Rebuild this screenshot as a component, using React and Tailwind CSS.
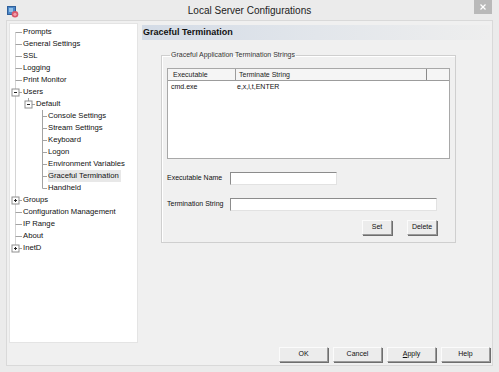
import React from 'react';

const rows = [
  { label: 'Prompts', lvl: 0 },
  { label: 'General Settings', lvl: 0 },
  { label: 'SSL', lvl: 0 },
  { label: 'Logging', lvl: 0 },
  { label: 'Print Monitor', lvl: 0 },
  { label: 'Users', lvl: 0, box: 'minus' },
  { label: 'Default', lvl: 1, box: 'minus' },
  { label: 'Console Settings', lvl: 2 },
  { label: 'Stream Settings', lvl: 2 },
  { label: 'Keyboard', lvl: 2 },
  { label: 'Logon', lvl: 2 },
  { label: 'Environment Variables', lvl: 2 },
  { label: 'Graceful Termination', lvl: 2, sel: true },
  { label: 'Handheld', lvl: 2, last: true },
  { label: 'Groups', lvl: 0, box: 'plus' },
  { label: 'Configuration Management', lvl: 0 },
  { label: 'IP Range', lvl: 0 },
  { label: 'About', lvl: 0 },
  { label: 'InetD', lvl: 0, box: 'plus', last: true },
];

const LC = '#a3a3a3';
const LC0 = '#d4d4d4';

function Box({ cx, kind }) {
  return (
    <g>
      <rect x={cx - 3.5} y={3} width={7} height={7} fill="#fff" stroke="#8f8f8f" strokeWidth="1" />
      <line x1={cx - 1.5} y1={6.5} x2={cx + 1.5} y2={6.5} stroke="#222" strokeWidth="1" />
      {kind === 'plus' && <line x1={cx} y1={5} x2={cx} y2={8} stroke="#222" strokeWidth="1" />}
    </g>
  );
}

function Gutter({ row, i }) {
  const widths = [13, 26, 38];
  const w = widths[row.lvl];
  const x0 = 5.5, x1 = 18.5, x2 = 32.5;
  const isFirst = i === 0;
  const isLast0 = row.lvl === 0 && row.last;
  return (
    <svg width={w} height={12} className="shrink-0 block">
      <line x1={x0} y1={isFirst ? 6.5 : 0} x2={x0} y2={isLast0 ? 6.5 : 12} stroke={LC0} strokeWidth="1" />
      {row.lvl === 0 && <line x1={x0} y1={6.5} x2={12} y2={6.5} stroke={LC} strokeWidth="1" />}
      {row.lvl === 0 && row.box && <Box cx={x0} kind={row.box} />}
      {row.lvl === 1 && (
        <>
          <line x1={x1} y1={0} x2={x1} y2={6.5} stroke={LC} strokeWidth="1" />
          <line x1={x1} y1={6.5} x2={25} y2={6.5} stroke={LC} strokeWidth="1" />
          <Box cx={x1} kind={row.box} />
        </>
      )}
      {row.lvl === 2 && (
        <>
          <line x1={x2} y1={0} x2={x2} y2={row.last ? 6.5 : 12} stroke={LC} strokeWidth="1" />
          <line x1={x2} y1={6.5} x2={37} y2={6.5} stroke={LC} strokeWidth="1" />
        </>
      )}
    </svg>
  );
}

function Btn({ children, className }) {
  return (
    <div
      className={
        'h-[15px] flex items-center justify-center bg-[#ececec] border border-t-[#fbfbfb] border-l-[#fbfbfb] border-r-[#9a9a9a] border-b-[#9a9a9a] shadow-[1px_1px_0_0_#6e6e6e] text-[7px] text-[#111] ' +
        className
      }
    >
      {children}
    </div>
  );
}

export default function App() {
  return (
    <div className="w-[499px] h-[372px] bg-[#ebebeb] flex flex-col overflow-hidden font-['Liberation_Sans',Arial,sans-serif] text-[#111]">
      {/* Title bar */}
      <div className="h-[20px] flex items-start shrink-0">
        <div className="w-[32px] pl-[7px] pt-[6px]">
          <svg width="12" height="12" viewBox="0 0 12 12" className="block">
            <rect x="0.5" y="0.5" width="8" height="8" fill="#4b86c7" stroke="#2f5f99" />
            <rect x="2" y="2" width="4" height="4" fill="#8fc0e8" />
            <circle cx="8" cy="8.3" r="3.3" fill="#d9566a" />
            <circle cx="8" cy="8.3" r="1.6" fill="#f0a0aa" />
          </svg>
        </div>
        <div className="flex-1 text-center text-[10px] leading-[20px] pt-[1px] text-[#222]">
          Local Server Configurations
        </div>
        <div className="w-[32px] flex justify-end pr-[7px]">
          <div className="w-[18px] h-[14px] bg-[#b9b9b9] flex items-center justify-center">
            <svg width="6" height="6" viewBox="0 0 6 6" className="block">
              <line x1="0.5" y1="0.5" x2="5.5" y2="5.5" stroke="#fff" strokeWidth="1.3" />
              <line x1="5.5" y1="0.5" x2="0.5" y2="5.5" stroke="#fff" strokeWidth="1.3" />
            </svg>
          </div>
        </div>
      </div>

      {/* Client area */}
      <div className="mx-[6px] h-[346px] shrink-0 bg-[#f0f0f0] border border-[#d9d9d9] flex flex-col">
        <div className="flex pt-[2px] pl-[2px] h-[322px]">
          {/* Tree */}
          <div className="w-[129px] h-[320px] bg-white border border-[#e4e4e4] pt-[2px] text-[7.7px] leading-[12px]">
            {rows.map((row, i) => (
              <div key={row.label} className="h-[12px] flex items-center">
                <Gutter row={row} i={i} />
                <span className={row.sel ? 'bg-[#e8e8e8] pr-[2px] whitespace-nowrap' : 'whitespace-nowrap'}>{row.label}</span>
              </div>
            ))}
          </div>

          {/* Right panel */}
          <div className="flex-1 ml-[4px] flex flex-col">
            <div className="mt-[2px] h-[15px] mr-[2px] bg-gradient-to-r from-[#d3dbe6] via-[#e2e6eb] to-[#eeeeee] flex items-center pl-[1px] pt-[1px]">
              <span className="text-[9px] font-bold text-[#111]">Graceful Termination</span>
            </div>

            <fieldset className="ml-[19px] mt-[11px] w-[294px] h-[192px] border border-[#cfcfcf] shadow-[inset_1px_1px_0_0_#fff] px-[5px] pt-[9px]">
              <legend className="ml-[3px] px-[1px] text-[7px] leading-[8px] text-[#333]">
                Graceful Application Termination Strings
              </legend>

              {/* List view */}
              <div className="w-[283px] h-[91px] bg-white border border-[#a8a8a8] flex flex-col">
                <div className="h-[12px] flex bg-[#f5f5f5] border-b border-[#9c9c9c] text-[7px] leading-[11px] text-[#222]">
                  <div className="w-[68px] border-r border-[#9c9c9c] pl-[5px]">Executable</div>
                  <div className="w-[191px] border-r border-[#8a8a8a] pl-[3px]">Terminate String</div>
                  <div className="flex-1" />
                </div>
                <div className="h-[12px] flex text-[7px] leading-[12px]">
                  <div className="w-[69px] pl-[3px]">cmd.exe</div>
                  <div className="pl-[0px]">e,x,i,t,ENTER</div>
                </div>
              </div>

              {/* Executable Name */}
              <div className="flex items-center mt-[13px]">
                <div className="w-[63px] text-[7px]">Executable Name</div>
                <div className="w-[107px] h-[13px] bg-white border border-t-[#8c8c8c] border-l-[#8c8c8c] border-r-[#e2e2e2] border-b-[#e2e2e2]" />
              </div>

              {/* Termination String */}
              <div className="flex items-center mt-[13px]">
                <div className="w-[63px] text-[7px]">Termination String</div>
                <div className="w-[207px] h-[13px] bg-white border border-t-[#8c8c8c] border-l-[#8c8c8c] border-r-[#e2e2e2] border-b-[#e2e2e2]" />
              </div>

              <div className="flex mt-[9px] ml-[195px] gap-[15px]">
                <Btn className="w-[30px]">Set</Btn>
                <Btn className="w-[30px]">Delete</Btn>
              </div>
            </fieldset>
          </div>
        </div>

        {/* Bottom buttons */}
        <div className="flex justify-end gap-[5px] pr-[2px] mt-[4px]">
          <Btn className="w-[49px]">OK</Btn>
          <Btn className="w-[49px]">Cancel</Btn>
          <Btn className="w-[49px]"><span><span className="underline">A</span>pply</span></Btn>
          <Btn className="w-[49px]">Help</Btn>
        </div>
      </div>
    </div>
  );
}
